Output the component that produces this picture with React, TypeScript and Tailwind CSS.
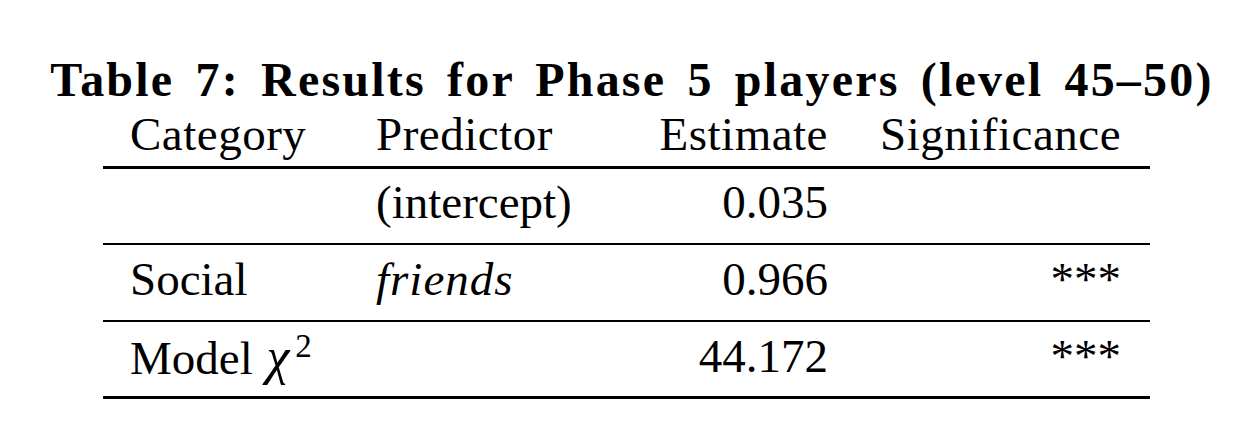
import React from "react";

const serif = "[font-family:'Liberation_Serif','Times_New_Roman',serif]";

export default function App() {
  return (
    <div className={`w-[1260px] h-[428px] bg-white text-black ${serif} overflow-hidden`}>
      <div className="pt-[56px] pl-[4px] text-center text-[48px] leading-[48px] font-bold tracking-[2.2px] [word-spacing:7px] whitespace-nowrap">
        Table 7: Results for Phase 5 players (level 45–50)
      </div>
      <div className="ml-[103px] w-[1047px] mt-[7px] text-[47px] leading-[47px]">
        <div className="grid grid-cols-[246px_269px_183px_293px] pl-[27px] pr-[29px] h-[55px] tracking-[0.5px]">
          <div>Category</div>
          <div>Predictor</div>
          <div className="text-right">Estimate</div>
          <div className="text-right">Significance</div>
        </div>
        <div className="h-[3px] bg-black" />
        <div className="grid grid-cols-[246px_269px_183px_293px] pl-[27px] pr-[29px] h-[74px] pt-[10px]">
          <div></div>
          <div>(intercept)</div>
          <div className="text-right">0.035</div>
          <div className="text-right"></div>
        </div>
        <div className="h-[2px] bg-black" />
        <div className="grid grid-cols-[246px_269px_183px_293px] pl-[27px] pr-[29px] h-[75px] pt-[11px]">
          <div>Social</div>
          <div className="italic tracking-[1px]">friends</div>
          <div className="text-right">0.966</div>
          <div className="text-right">***</div>
        </div>
        <div className="h-[2px] bg-black" />
        <div className="grid grid-cols-[246px_269px_183px_293px] pl-[27px] pr-[29px] h-[74px] pt-[11px]">
          <div className="whitespace-nowrap">
            Model <span className="italic text-[52px] ml-[2px]">χ</span>
            <sup className="text-[33px] relative -top-[17px] ml-[6px]">2</sup>
          </div>
          <div></div>
          <div className="text-right">44.172</div>
          <div className="text-right">***</div>
        </div>
        <div className="h-[3px] bg-black" />
      </div>
    </div>
  );
}
